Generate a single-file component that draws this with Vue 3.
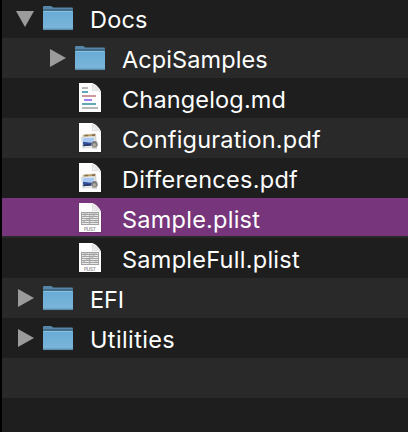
<script setup>
const rows = [
  { name: 'Docs', icon: 'folder', level: 0, arrow: 'down', spacing: 0.2 },
  { name: 'AcpiSamples', icon: 'folder', level: 1, arrow: 'right', spacing: 0.1 },
  { name: 'Changelog.md', icon: 'code', level: 1, spacing: 0.16 },
  { name: 'Configuration.pdf', icon: 'pdf', level: 1, spacing: 0.2 },
  { name: 'Differences.pdf', icon: 'pdf', level: 1, spacing: 0.27 },
  { name: 'Sample.plist', icon: 'plist', level: 1, selected: true, spacing: 0.24 },
  { name: 'SampleFull.plist', icon: 'plist', level: 1, spacing: 0.27 },
  { name: 'EFI', icon: 'folder', level: 0, arrow: 'right', spacing: -0.1 },
  { name: 'Utilities', icon: 'folder', level: 0, arrow: 'right', spacing: 0.38 },
  { name: '', level: 0 },
  { name: '', level: 0 },
]
</script>

<template>
  <div class="browser">
    <svg class="defs" width="0" height="0" aria-hidden="true">
      <defs>
        <linearGradient id="folder-front" x1="0" y1="0" x2="0" y2="1">
          <stop offset="0" stop-color="#67abd7" />
          <stop offset="1" stop-color="#7db6d9" />
        </linearGradient>
        <linearGradient id="fold" x1="0" y1="1" x2="1" y2="0">
          <stop offset="0" stop-color="#fff" />
          <stop offset="0.5" stop-color="#e4e4e4" />
          <stop offset="1" stop-color="#fff" />
        </linearGradient>
      </defs>
    </svg>
    <div
      v-for="(row, i) in rows"
      :key="i"
      class="row"
      :class="{ selected: row.selected, child: row.level === 1 }"
    >
      <template v-if="row.name">
        <span class="disclosure">
          <svg v-if="row.arrow === 'right'" width="20" height="40" viewBox="0 0 20 40">
            <path d="M4 11 20 20 4 29z" fill="#9b9b9b" />
          </svg>
          <svg v-if="row.arrow === 'down'" width="20" height="40" viewBox="0 0 20 40">
            <path d="M2 13H20L11 29z" fill="#9b9b9b" />
          </svg>
        </span>
        <span class="icon">
          <svg v-if="row.icon === 'folder'" width="30" height="40" viewBox="0 0 30 40">
            <path d="M0 9.2Q0 8 1.2 8H7.6Q8.8 8 9.5 9L10.4 9.6H28.9Q30 9.6 30 10.8V18H0z" fill="#5588a8" />
            <path d="M0 11H30V14H0z" fill="#456d87" />
            <path d="M0 13.7Q0 13 .8 13H29.2Q30 13 30 13.7V31Q30 32 29 32H1Q0 32 0 31z" fill="url(#folder-front)" />
            <path d="M.5 13.5H29.5" stroke="#85c4e7" />
            <path d="M.1 30.5H29.9" stroke="#6ba2c4" />
            <path d="M.6 31.6H29.4" stroke="#527f9b" stroke-width=".8" />
          </svg>
          <svg v-else width="30" height="40" viewBox="-4 -5 30 40">
            <path d="M-.3 .5H14L22.3 8.5V29.6H-.3z" fill="#000" opacity=".25" />
            <path d="M0 0H12.5C16 0 22 6 22 9.5V29H0z" fill="#fdfdfd" />
            <path d="M12.8 .2Q14.2 3 13.6 7.6Q18.5 6.6 21.8 9.5Q20.7 4 12.8 .2z" fill="url(#fold)" />
            <path d="M13.5 2V7.7H18.5" fill="none" stroke="#d2d2d2" stroke-width=".7" />
            <g v-if="row.icon === 'code'">
              <path d="M3 4H9v2H3zM3 24H19v2H3z" fill="#b8b8b8" />
              <path d="M3 8H9v2H3zM3 20H17v2H3z" fill="#61a8b8" />
              <path d="M3 12H17v2H3z" fill="#cf999b" />
              <path d="M5 16H13v2H5z" fill="#a17ff4" />
            </g>
            <g v-if="row.icon === 'pdf'">
              <path d="M4 12 16.4 10.8 17.6 22 5 23.5z" fill="#f5f1e8" stroke="#b9b3a5" stroke-width=".5" />
              <path d="M4.3 12.1 16.4 11V12.7L4.5 13.7z" fill="#b89a62" />
              <path d="M6 11.7h3v1.5H6zM13 11.2h3v1.7h-3z" fill="#4f4430" opacity=".5" />
              <path d="M2.4 14.4 15.5 13.5 17 23.5 4 25z" fill="#f7f7f5" stroke="#b5b5b5" stroke-width=".5" />
              <path d="M3.5 15.3 14.8 14.4 15.3 19 4.1 20z" fill="#a9c9f3" />
              <path d="M3.9 18.8 10 19.4 15.3 19.4 15.7 22.1 4.5 23.2z" fill="#304d9b" />
              <path d="M4.1 22 10 21.2 14 22.2 4.5 23.3z" fill="#263158" />
              <circle cx="15.6" cy="21.6" r="3" fill="#7c7e83" stroke="#a5a29a" stroke-width=".7" />
              <circle cx="15.4" cy="22" r="1.7" fill="#b0aba3" />
              <path d="M13 20Q14.8 17.9 17.6 19.3" fill="none" stroke="#5c6068" stroke-width=".8" />
              <path d="M12.5 24.5H18V25.5H13z" fill="#b9b5b0" />
            </g>
            <g v-if="row.icon === 'plist'">
              <path d="M2 9H20V22H2z" fill="#a3a3a3" />
              <path
                d="M3 10.5H19M3 12.5H19M3 14.5H19M3 16.5H19M3 18.5H19M3 20.5H19"
                stroke="#e8e8e8"
                stroke-width="1"
              />
              <path d="M2.5 10V22M10.8 10V22M19.5 10V22" stroke="#a3a3a3" />
              <path d="M4 10.5h5M12 10.5h6M5 12.5h2M7 16.5h3M12 14.5h2M16 18.5h2M4 18.5h2M13 12.5h3" stroke="#c6c6c6" />
              <text x="11" y="27.7" text-anchor="middle" textLength="12" class="badge">PLIST</text>
            </g>
          </svg>
        </span>
        <span class="label" :style="{ letterSpacing: row.spacing + 'px' }">{{ row.name }}</span>
      </template>
    </div>
  </div>
</template>

<style>
body {
  background: #000;
  overflow: hidden;
}
</style>

<style scoped>
.browser {
  box-sizing: border-box;
  width: 406px;
  height: 432px;
  margin-left: 2px;
  overflow: hidden;
  background: #1e1e1e;
  display: flex;
  flex-direction: column;
}
.defs {
  display: block;
  flex: none;
}
.row {
  box-sizing: border-box;
  flex: none;
  height: 40px;
  padding-left: 12px;
  display: flex;
  background: #1e1e1e;
}
.row:nth-child(2) {
  margin-top: -2px;
}
.row:nth-child(odd) {
  background: #292929;
}
.row.child {
  padding-left: 44px;
}
.row.selected {
  background: #77367b;
  border-bottom: 2px solid #292929;
}
.disclosure {
  flex: none;
  width: 20px;
  height: 40px;
}
.icon {
  flex: none;
  width: 30px;
  height: 40px;
  margin-left: 9px;
}
.disclosure svg,
.icon svg {
  display: block;
}
.label {
  margin-left: 17px;
  font-family: Inter, 'Liberation Sans', sans-serif;
  font-size: 23.5px;
  font-weight: 400;
  line-height: 43px;
  height: 40px;
  color: #fff;
  white-space: pre;
}
.badge {
  font-family: Inter, sans-serif;
  font-size: 4.8px;
  font-weight: 600;
  fill: #999;
}
</style>
